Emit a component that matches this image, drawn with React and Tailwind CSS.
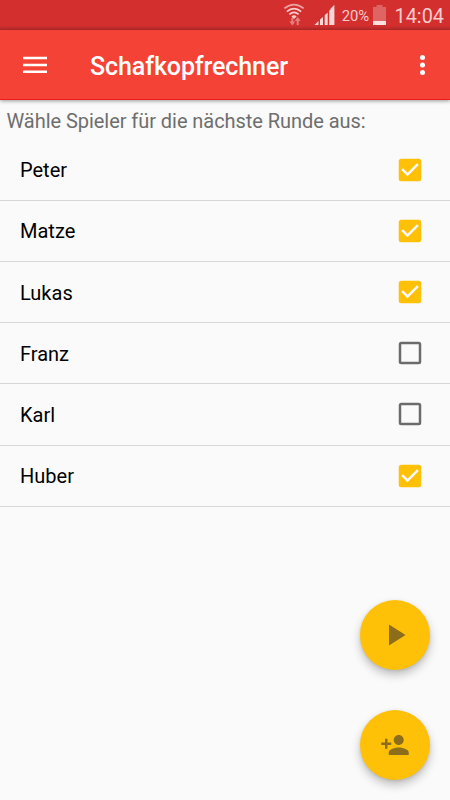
import React from "react";

const players = [
  { name: "Peter", selected: true },
  { name: "Matze", selected: true },
  { name: "Lukas", selected: true },
  { name: "Franz", selected: false },
  { name: "Karl", selected: false },
  { name: "Huber", selected: true },
];

function StatusBar() {
  return (
    <div className="flex h-[30px] shrink-0 bg-[#d32f2f] bg-linear-to-b from-[#d32f2f] from-85% to-[#b92a2a]">
      <svg className="ml-auto" width="180" height="30" viewBox="0 0 180 30" fill="none">
        <g stroke="#f7cfcf" strokeWidth="1.7">
          <path d="M14.3 8.4Q24 .8 33.7 8.4" stroke="#eba1a1" />
          <path d="M16.8 11.6Q24 5.6 31.2 11.6" />
          <path d="M19.4 14.4Q24 10.4 28.6 14.4" />
        </g>
        <path d="M21.4 16.4Q24 14.2 26.6 16.4L24 19Z" fill="#f7cfcf" />
        <path d="M21.3 18v3.5h-2l3 4 3-4h-2V18ZM26.7 25v-4h-2l3-4 3 4h-2v4Z" fill="#e57f7f" />
        <path d="M44.5 25l4-4v4ZM50 19.5l3-2.6V25h-3ZM54.7 15.2l3-2.7V25h-3ZM59.2 10.8l2-2 .9-.8V25h-2.9Z" fill="#f9d6d6" />
        <path d="M60.8 8.5l3.6-3.7V25h-3.6Z" fill="#f9d6d6" />
        <text x="71.7" y="21" fontSize="14.6" fill="#f6cccc" className="font-[Roboto,sans-serif]" textLength="27.5" lengthAdjust="spacingAndGlyphs">20%</text>
        <path d="M106.5 5h6v2h3.5v18h-13V7h3.5Z" fill="#df6565" />
        <path d="M103 21h13v4h-13Z" fill="#fbe0e0" />
        <text x="124.5" y="22.6" fontSize="20.5" fill="#f6cccc" className="font-[Roboto,sans-serif]" textLength="49.5" lengthAdjust="spacingAndGlyphs">14:04</text>
      </svg>
    </div>
  );
}

function AppBar() {
  return (
    <header className="relative flex h-[70px] shrink-0 items-center border-b border-[#ee1c16] bg-[#f44336] shadow-[0_1px_4px_rgba(0,0,0,0.4)]">
      <button aria-label="Menü" className="ml-[23px]">
        <svg width="24" height="18" viewBox="0 0 24 18" fill="#fff" className="block">
          <path d="M0 .8h24v2.5H0ZM0 7.7h24v2.5H0ZM0 14.6h24v2.5H0Z" />
        </svg>
      </button>
      <h1 className="mt-1 ml-[43px] text-[25px] leading-8 font-medium tracking-[-0.1px] whitespace-nowrap text-white">
        Schafkopfrechner
      </h1>
      <button aria-label="Mehr" className="mr-[25px] ml-auto">
        <svg width="5" height="22" viewBox="0 0 5 22" fill="#fff" className="block">
          <circle cx="2.5" cy="3.6" r="2.5" />
          <circle cx="2.5" cy="11.1" r="2.5" />
          <circle cx="2.5" cy="18.6" r="2.5" />
        </svg>
      </button>
    </header>
  );
}

function CheckIcon({ checked }) {
  return (
    <svg width="30" height="30" viewBox="0 0 24 24" fill={checked ? "#ffc107" : "#6b6b6b"}>
      {checked ? (
        <path d="M19 3H5a2 2 0 0 0-2 2v14a2 2 0 0 0 2 2h14a2 2 0 0 0 2-2V5a2 2 0 0 0-2-2zm-9 14l-5-5 1.41-1.41L10 14.17l7.59-7.59L19 8l-9 9z" />
      ) : (
        <path d="M19 5v14H5V5h14m0-2H5a2 2 0 0 0-2 2v14a2 2 0 0 0 2 2h14a2 2 0 0 0 2-2V5a2 2 0 0 0-2-2z" />
      )}
    </svg>
  );
}

function Fab({ label, children }) {
  return (
    <button
      aria-label={label}
      className="flex size-[70px] items-center justify-center rounded-full bg-[#ffc107] shadow-[0_5px_10px_rgba(0,0,0,0.24),0_1px_3px_rgba(0,0,0,0.1)]"
    >
      {children}
    </button>
  );
}

export default function App() {
  return (
    <div className="relative flex h-[800px] w-[450px] flex-col overflow-hidden bg-[#fafafa] font-[Roboto,sans-serif]">
      <StatusBar />
      <AppBar />
      <p className="mt-[7px] h-[32.6px] pl-[6.5px] text-[20px] leading-7 tracking-[-0.05px] whitespace-nowrap text-[#6e6e6e]">
        Wähle Spieler für die nächste Runde aus:
      </p>
      <ul>
        {players.map((p) => (
          <li
            key={p.name}
            className="flex h-[61.2px] items-center justify-between border-b border-[#d6d6d6] pr-[25px] pl-5 text-[20px] text-black"
          >
            <span className="pt-px">{p.name}</span>
            <CheckIcon checked={p.selected} />
          </li>
        ))}
      </ul>
      <div className="absolute right-5 bottom-5 flex flex-col gap-10">
        <Fab label="Runde starten">
          <svg width="36" height="36" viewBox="0 0 24 24" fill="#8b6d1b">
            <path d="M8 5v14l11-7z" />
          </svg>
        </Fab>
        <Fab label="Spieler hinzufügen">
          <svg width="30" height="30" viewBox="0 0 24 24" fill="#8b6d1b">
            <path d="M15 12c2.21 0 4-1.79 4-4s-1.79-4-4-4-4 1.79-4 4 1.79 4 4 4zm-9-2V7H4v3H1v2h3v3h2v-3h3v-2H6zm9 4c-2.67 0-8 1.34-8 4v2h16v-2c0-2.66-5.33-4-8-4z" />
          </svg>
        </Fab>
      </div>
    </div>
  );
}
